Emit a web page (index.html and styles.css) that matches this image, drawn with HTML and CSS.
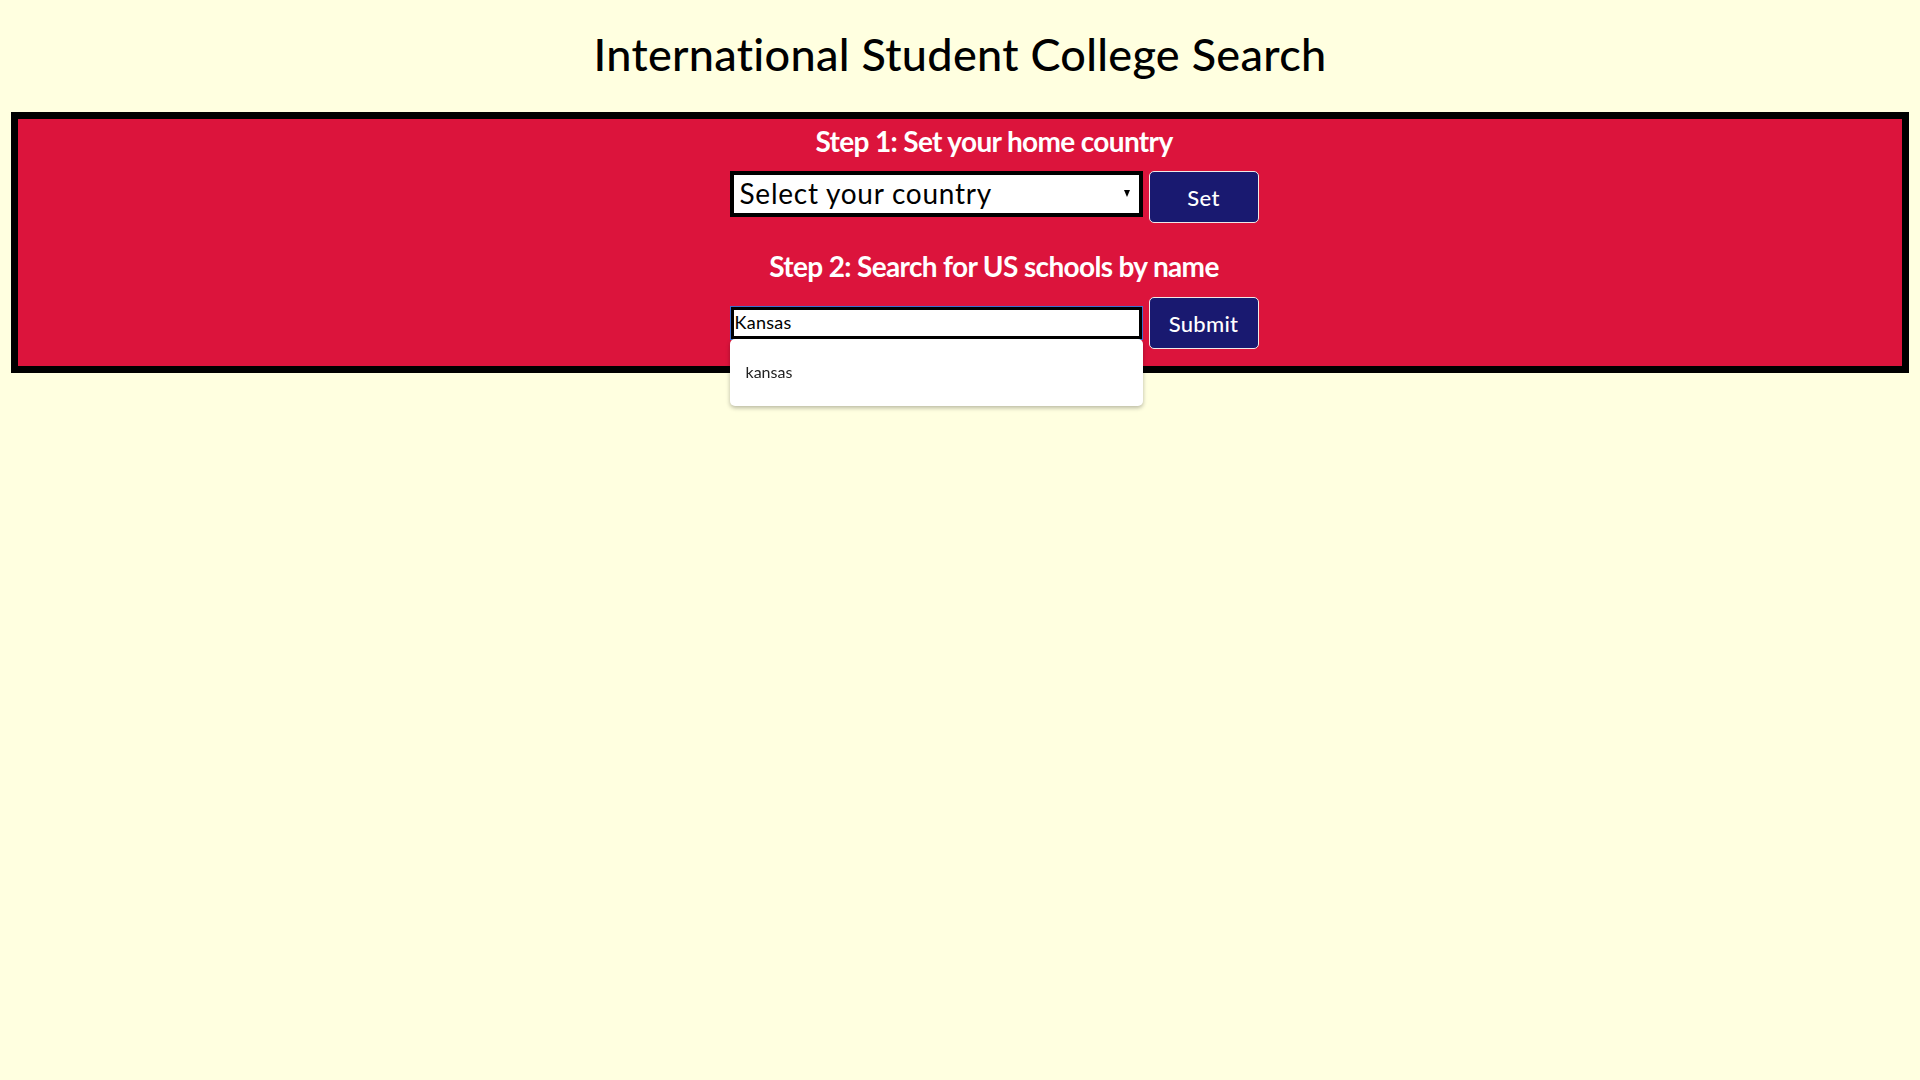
FILE: index.html
```html
<!DOCTYPE html>
<html lang="en">
<head>
<meta charset="utf-8">
<title>International Student College Search</title>
<link rel="stylesheet" href="styles.css">
</head>
<body>
  <h1 class="title">International Student College Search</h1>
  <section class="panel">
    <div class="panel-inner">
      <h2 class="step step-one">Step 1: Set your home country</h2>
      <div class="row row-top">
        <div class="select-wrap">
          <select class="country">
            <option>Select your country</option>
          </select>
          <span class="arrow"></span>
        </div>
        <button class="btn" type="button">Set</button>
      </div>
      <h2 class="step step-two">Step 2: Search for US schools by name</h2>
      <div class="row row-bottom">
        <div class="search-wrap">
          <input class="search" type="text" value="Kansas" autofocus>
          <ul class="suggest">
            <li class="suggest-item">kansas</li>
          </ul>
        </div>
        <button class="btn" type="button">Submit</button>
      </div>
    </div>
  </section>
</body>
</html>
```
FILE: styles.css
```css
html, body {
  margin: 0;
  padding: 0;
}
body {
  background: #FFFFE0;
  font-family: Lato, "Open Sans", sans-serif;
  color: #000;
  min-height: 1080px;
}
.title {
  margin: 27px 0 31px;
  font-size: 45px;
  line-height: 54px;
  font-weight: 500;
  letter-spacing: 0.3px;
  text-align: center;
}
.panel {
  margin: 0 11px;
  border: 7px solid #000;
  background: #DC143C;
}
.panel-inner {
  padding: 5px 0 17px 68px;
  display: flex;
  flex-direction: column;
  align-items: center;
}
.step {
  margin: 0;
  color: #fff;
  font-size: 28px;
  line-height: 34px;
  font-weight: 700;
  letter-spacing: -0.65px;
  text-align: center;
}
.step-two {
  margin-top: 26px;
}
.row {
  display: flex;
  gap: 6px;
}
.row-top {
  margin-top: 13px;
  align-items: flex-start;
}
.row-bottom {
  margin-top: 14px;
  align-items: center;
}
.select-wrap {
  position: relative;
  width: 413px;
  height: 46px;
}
.country {
  appearance: none;
  -webkit-appearance: none;
  box-sizing: border-box;
  width: 100%;
  height: 46px;
  margin: 0;
  border: 4px solid #000;
  border-radius: 0;
  background: #fff;
  color: #000;
  font-family: Lato, "Open Sans", sans-serif;
  font-size: 28px;
  letter-spacing: 0.75px;
  padding: 0 0 2px 6px;
  outline: none;
}
.arrow {
  position: absolute;
  right: 13px;
  top: 19px;
  width: 0;
  height: 0;
  border-left: 3.5px solid transparent;
  border-right: 3.5px solid transparent;
  border-top: 7px solid #000;
}
.btn {
  box-sizing: border-box;
  width: 110px;
  height: 52px;
  margin: 0;
  background: #191970;
  color: #fff;
  border: 1px solid #f0e8e8;
  border-radius: 5px;
  font-family: Lato, "Open Sans", sans-serif;
  font-size: 22px;
  font-weight: 500;
  letter-spacing: 0.3px;
  padding: 0;
}
.search-wrap {
  position: relative;
  width: 411px;
  height: 32px;
  margin: 0 1px;
}
.search {
  box-sizing: border-box;
  display: block;
  width: 100%;
  height: 32px;
  margin: 0;
  border: 3px solid #000;
  border-radius: 0;
  background: #fff;
  color: #000;
  font-family: Lato, "Open Sans", sans-serif;
  font-size: 18px;
  letter-spacing: 0.3px;
  padding: 0 0 2px 1px;
  outline: 1px solid #3d6fd0;
}
.search:focus {
  outline: 1px solid #3d6fd0;
}
.suggest {
  position: absolute;
  left: -1px;
  right: -1px;
  top: 100%;
  margin: 0;
  padding: 23px 16px 24px;
  list-style: none;
  background: #fff;
  border-radius: 5px;
  box-shadow: 0 2px 4px rgba(0, 0, 0, 0.28);
  z-index: 10;
}
.suggest-item {
  font-size: 16px;
  line-height: 20px;
  color: #222;
}
```
